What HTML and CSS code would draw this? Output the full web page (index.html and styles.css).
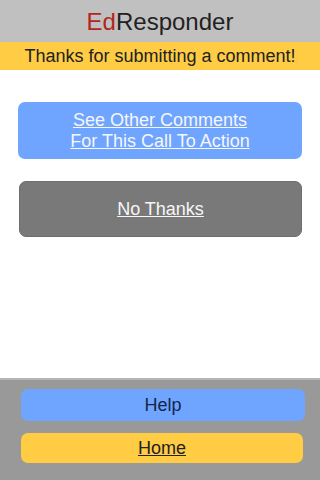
FILE: index.html
```html
<!DOCTYPE html>
<html>
<head>
<meta charset="utf-8">
<link rel="stylesheet" href="styles.css">
</head>
<body>
<div class="app">
  <header class="header"><span class="ed">Ed</span>Responder</header>
  <div class="notice">Thanks for submitting a comment!</div>
  <main class="main">
    <a class="btn btn-blue" href="#">See Other Comments<br>For This Call To Action</a>
    <a class="btn btn-gray" href="#">No Thanks</a>
  </main>
  <footer class="footer">
    <a class="fbtn fbtn-help">Help</a>
    <a class="fbtn fbtn-home" href="#">Home</a>
  </footer>
</div>
</body>
</html>
```
FILE: styles.css
```css
html, body {
  margin: 0;
  padding: 0;
  height: 100%;
}
body {
  font-family: "Liberation Sans", Arial, sans-serif;
  background: #fff;
}
.app {
  display: flex;
  flex-direction: column;
  height: 480px;
}
.header {
  height: 42px;
  background: #c0c0c0;
  color: #222;
  font-size: 24px;
  line-height: 44px;
  text-align: center;
}
.ed {
  color: #b3261e;
}
.notice {
  height: 28px;
  background: #ffcc44;
  color: #222;
  font-size: 18px;
  line-height: 28px;
  text-align: center;
}
.main {
  flex: 1;
  display: flex;
  flex-direction: column;
  gap: 22px;
  padding: 32px 18px 0 18px;
}
.btn {
  display: flex;
  align-items: center;
  justify-content: center;
  text-align: center;
  font-size: 18px;
  line-height: 21px;
  color: #f6f6f6;
  text-decoration: underline;
  border-radius: 7px;
}
.btn-blue {
  height: 57px;
  background: #6fa5ff;
}
.btn-gray {
  height: 56px;
  margin-left: 1px;
  background: #797979;
  border: 1px solid #6e6e6e;
  box-sizing: border-box;
}
.footer {
  height: 102px;
  background: #999999;
  border-top: 2px solid #b5b5b5;
  display: flex;
  flex-direction: column;
  gap: 12px;
  padding: 9px 15px 0 21px;
  box-sizing: border-box;
}
.fbtn {
  display: flex;
  align-items: center;
  justify-content: center;
  font-size: 18px;
  border-radius: 7px;
}
.fbtn-help {
  height: 32px;
  background: #6fa5ff;
  color: #13264a;
}
.fbtn-home {
  height: 30px;
  margin-right: 2px;
  background: #ffcc44;
  color: #222;
  text-decoration: underline;
}
```
